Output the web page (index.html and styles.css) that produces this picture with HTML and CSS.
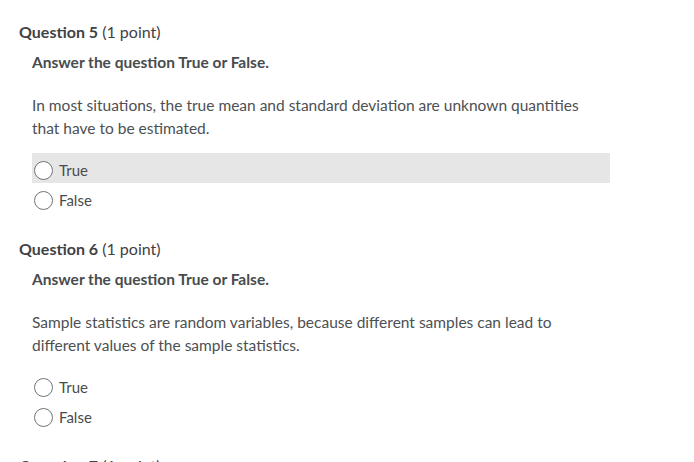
FILE: index.html
```html
<!DOCTYPE html>
<html>
<head>
<meta charset="utf-8">
<link rel="stylesheet" href="styles.css">
</head>
<body>
<div class="quiz">
  <section class="question">
    <h2 class="q-title"><strong>Question 5</strong> (1 point)</h2>
    <div class="q-body">
      <p class="prompt">Answer the question True or False.</p>
      <p class="text">In most situations, the true mean and standard deviation are unknown quantities that have to be estimated.</p>
      <div class="choices">
        <label class="choice hover"><span class="radio"></span><span>True</span></label>
        <label class="choice"><span class="radio"></span><span>False</span></label>
      </div>
    </div>
  </section>
  <section class="question">
    <h2 class="q-title"><strong>Question 6</strong> (1 point)</h2>
    <div class="q-body">
      <p class="prompt">Answer the question True or False.</p>
      <p class="text">Sample statistics are random variables, because different samples can lead to different values of the sample statistics.</p>
      <div class="choices">
        <label class="choice"><span class="radio"></span><span>True</span></label>
        <label class="choice"><span class="radio"></span><span>False</span></label>
      </div>
    </div>
  </section>
  <section class="question">
    <h2 class="q-title"><strong>Question 7</strong> (1 point)</h2>
  </section>
</div>
</body>
</html>
```
FILE: styles.css
```css
html, body {
  margin: 0;
  padding: 0;
  background: #ffffff;
}
body {
  font-family: Lato, "Noto Sans", sans-serif;
  color: #494c4e;
  overflow: hidden;
}
.quiz {
  padding: 22px 0 0 19px;
  display: flex;
  flex-direction: column;
  gap: 26px;
}
.q-title {
  margin: 0;
  font-size: 16px;
  line-height: 20px;
  font-weight: 400;
  color: #3f4245;
}
.q-title strong {
  font-weight: 700;
}
.q-body {
  padding-left: 13px;
}
.prompt {
  margin: 10px 0 0;
  font-size: 15.5px;
  line-height: 20px;
  font-weight: 700;
  color: #494c4e;
}
.text {
  margin: 22px 0 0;
  max-width: 560px;
  font-size: 15.5px;
  line-height: 23px;
  color: #4d5053;
}
.choices {
  margin-top: 13px;
  width: 578px;
  display: flex;
  flex-direction: column;
}
.choice {
  height: 30px;
  box-sizing: border-box;
  padding: 4px 0 0 2px;
  display: flex;
  align-items: center;
  gap: 6px;
  font-size: 15px;
}
.choice.hover {
  background: #e6e6e6;
}
.radio {
  width: 19px;
  height: 19px;
  box-sizing: border-box;
  border: 1px solid #6f7377;
  border-radius: 50%;
  background: #ffffff;
}
```
